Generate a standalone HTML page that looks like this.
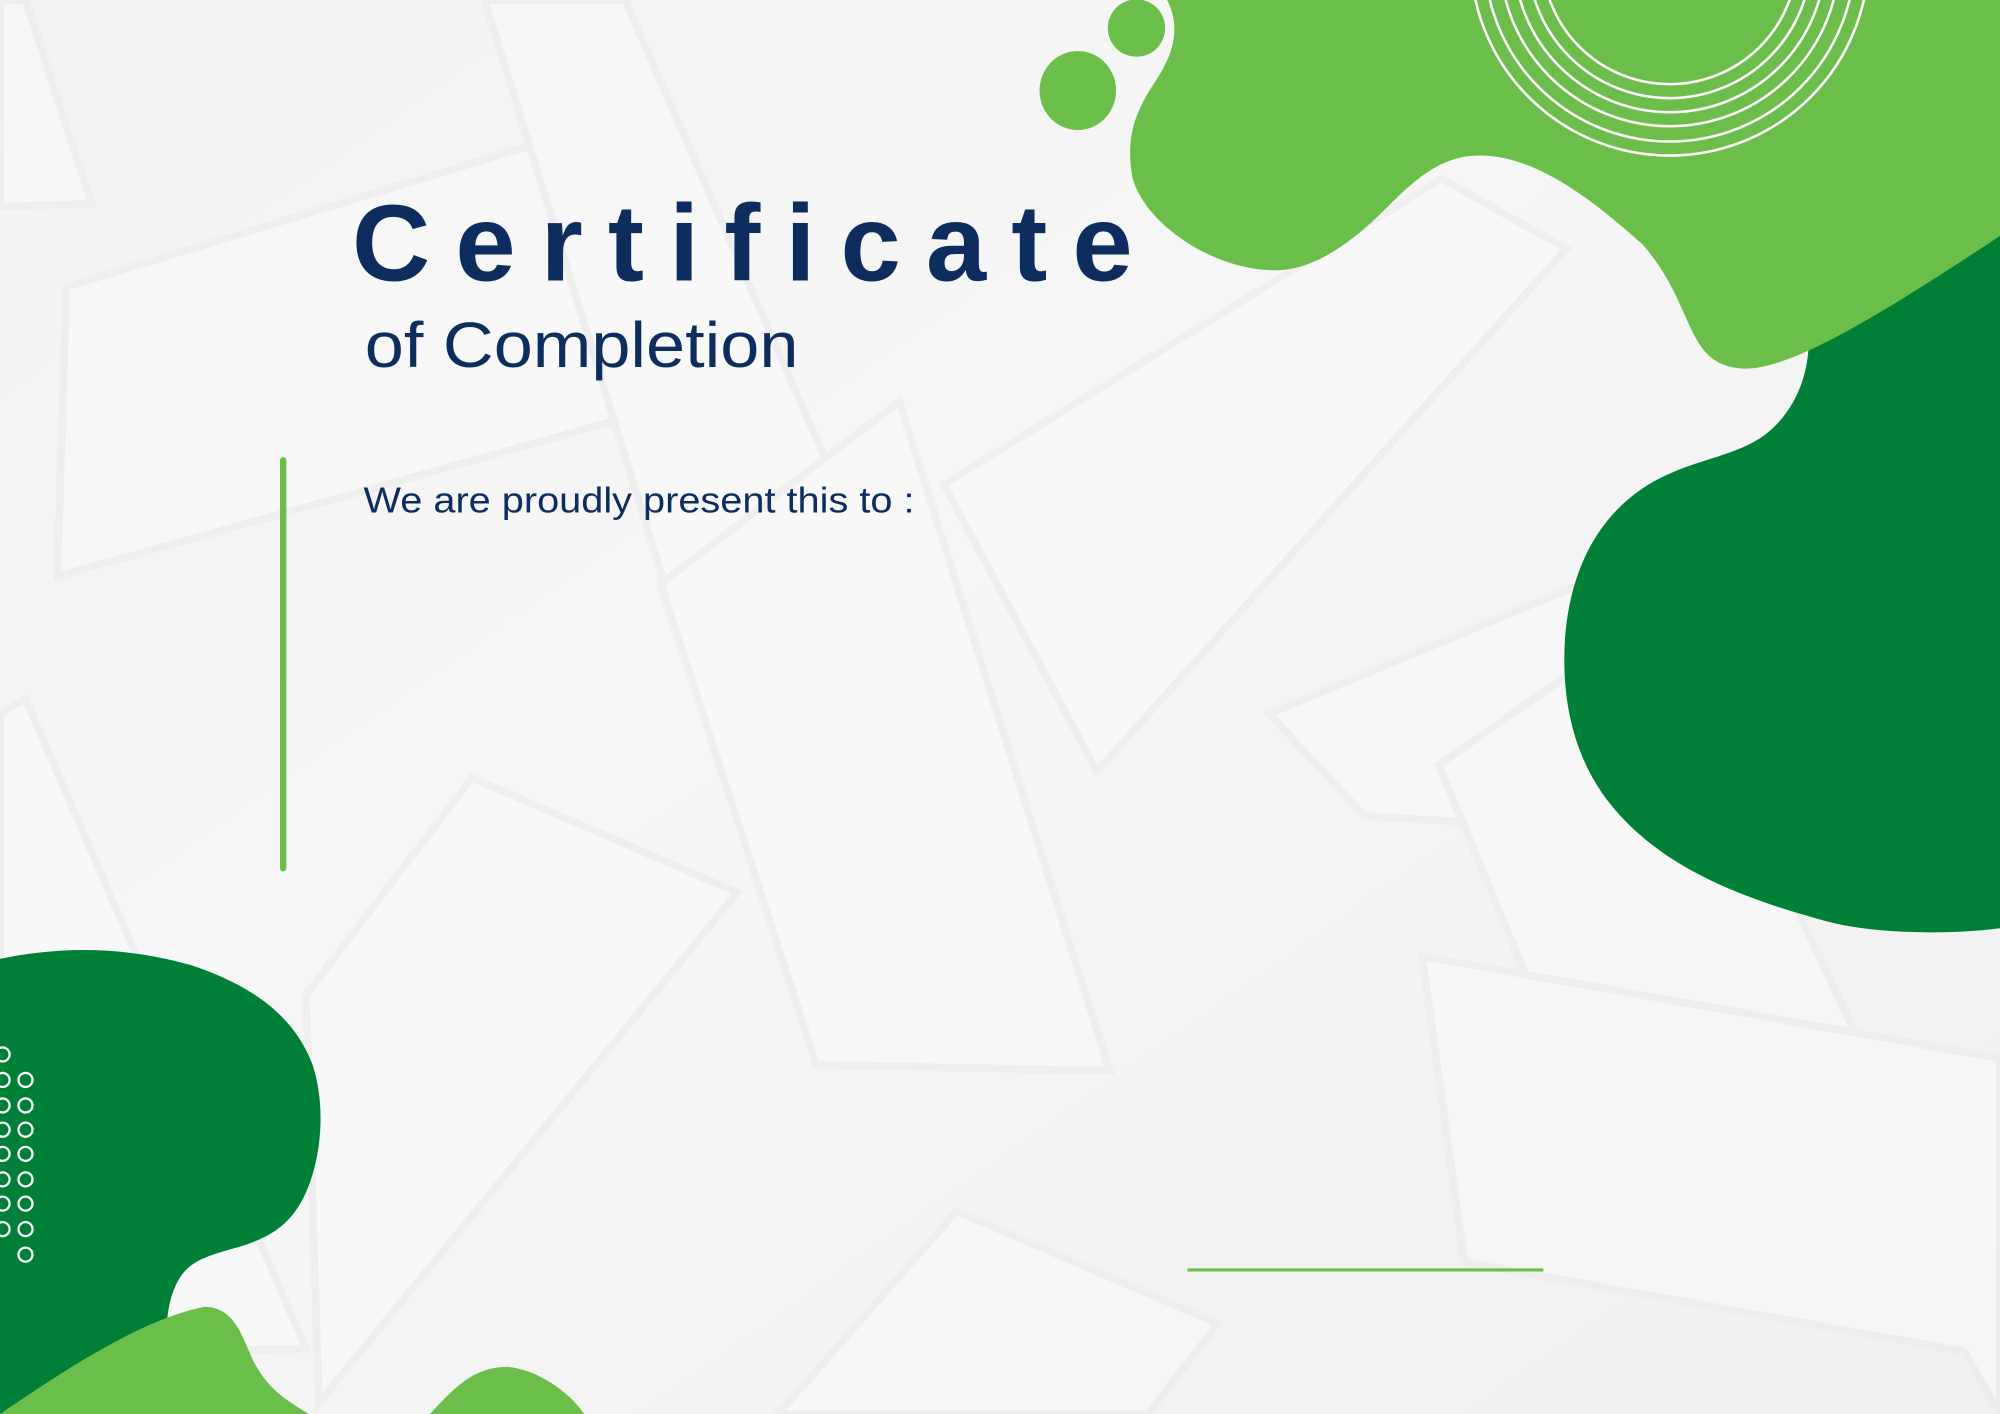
<!DOCTYPE html>
<html><head><meta charset="utf-8"><style>
html,body{margin:0;padding:0;width:2000px;height:1414px;overflow:hidden;background:#f2f2f2}
svg{display:block}
</style></head><body>
<svg width="2000" height="1414" viewBox="0 0 1568 1109" preserveAspectRatio="none" xmlns="http://www.w3.org/2000/svg">
<defs>
<linearGradient id="bg" x1="0" y1="0" x2="1" y2="1">
<stop offset="0" stop-color="#f2f2f2"/><stop offset="0.4" stop-color="#f6f6f6"/><stop offset="1" stop-color="#f0f0f0"/>
</linearGradient>
</defs>
<rect width="1568" height="1109" fill="url(#bg)"/>
<g fill="#fbfbfb" stroke="#ebeaea" stroke-width="6" opacity="0.55">
<polygon points="52,225 430,110 590,300 45,452"/>
<polygon points="0,0 20,0 72,160 0,162"/>
<polygon points="380,0 490,0 695,470 520,455"/>
<polygon points="518,458 705,315 870,840 640,835"/>
<polygon points="0,560 20,548 240,1058 0,1060"/>
<polygon points="240,780 370,610 578,700 250,1100"/>
<polygon points="1130,140 1228,195 860,605 740,380"/>
<polygon points="995,560 1235,460 1240,650 1070,640"/>
<polygon points="1128,600 1300,480 1515,940 1275,955"/>
<polygon points="1115,750 1568,830 1568,1109 1540,1060 1148,990"/>
<polygon points="610,1109 750,950 955,1038 900,1109"/>
</g>
<path d="M1568,180 L1568,728 C1530,733 1470,733 1430,722 C1360,703 1300,678 1262,630 C1232,592 1224,545 1227,500 C1231,450 1250,410 1285,385 C1320,360 1360,360 1385,340 C1410,320 1418,290 1418,268 Z" fill="#008037"/>
<path d="M915,0 C925,20 922,40 905,65 C890,88 882,108 888,140 C898,175 950,212 1000,212 C1030,212 1060,190 1085,165 C1110,140 1130,122 1160,122 C1205,122 1250,158 1288,192 C1330,240 1320,285 1365,289 C1400,292 1470,250 1568,185 L1568,0 Z" fill="#6cbe4a"/>
<circle cx="891" cy="22" r="22.5" fill="#6cbe4a"/>
<ellipse cx="845" cy="71" rx="30" ry="31" fill="#6cbe4a"/>
<g fill="none" stroke="#fff" stroke-width="2">
<circle cx="1309" cy="-34" r="100"/>
<circle cx="1309" cy="-34" r="111"/>
<circle cx="1309" cy="-34" r="122"/>
<circle cx="1309" cy="-34" r="133"/>
<circle cx="1309" cy="-34" r="145"/>
<circle cx="1309" cy="-34" r="156"/>
</g>
<path d="M0,752 C40,744 90,740 150,757 C195,772 230,795 245,835 C255,865 253,905 240,935 C228,962 210,972 180,980 C160,986 145,990 137,1010 C128,1030 130,1060 130,1109 L0,1109 Z" fill="#008037"/>
<path d="M0,1109 C50,1075 110,1035 160,1025 C185,1025 190,1050 200,1070 C212,1092 228,1100 242,1109 Z" fill="#6cbe4a"/>
<path d="M337,1109 C355,1090 370,1072 398,1072 C420,1074 445,1090 458,1109 Z" fill="#6cbe4a"/>
<g fill="none" stroke="#fff" stroke-width="1.8">
<circle cx="2" cy="827" r="5.5"/>
<circle cx="2" cy="847" r="5.5"/><circle cx="20" cy="847" r="5.5"/>
<circle cx="2" cy="867" r="5.5"/><circle cx="20" cy="867" r="5.5"/>
<circle cx="2" cy="886" r="5.5"/><circle cx="20" cy="886" r="5.5"/>
<circle cx="2" cy="905" r="5.5"/><circle cx="20" cy="905" r="5.5"/>
<circle cx="2" cy="925" r="5.5"/><circle cx="20" cy="925" r="5.5"/>
<circle cx="2" cy="944" r="5.5"/><circle cx="20" cy="944" r="5.5"/>
<circle cx="2" cy="964" r="5.5"/><circle cx="20" cy="964" r="5.5"/>
<circle cx="20" cy="984" r="5.5"/>
</g>
<line x1="222" y1="361" x2="222" y2="681" stroke="#6cbe4a" stroke-width="5" stroke-linecap="round"/>
<line x1="931" y1="996" x2="1210" y2="996" stroke="#6cbe4a" stroke-width="2.5"/>
<g fill="#0d2d5e" font-family="'Liberation Sans', sans-serif">
<text x="276" y="220" font-size="85" font-weight="bold" textLength="612" lengthAdjust="spacing">Certificate</text>
<text x="286" y="288" font-size="50" textLength="340" lengthAdjust="spacingAndGlyphs">of Completion</text>
<text x="285" y="402" font-size="28" textLength="432" lengthAdjust="spacingAndGlyphs">We are proudly present this to :</text>
</g>
</svg>
</body></html>
